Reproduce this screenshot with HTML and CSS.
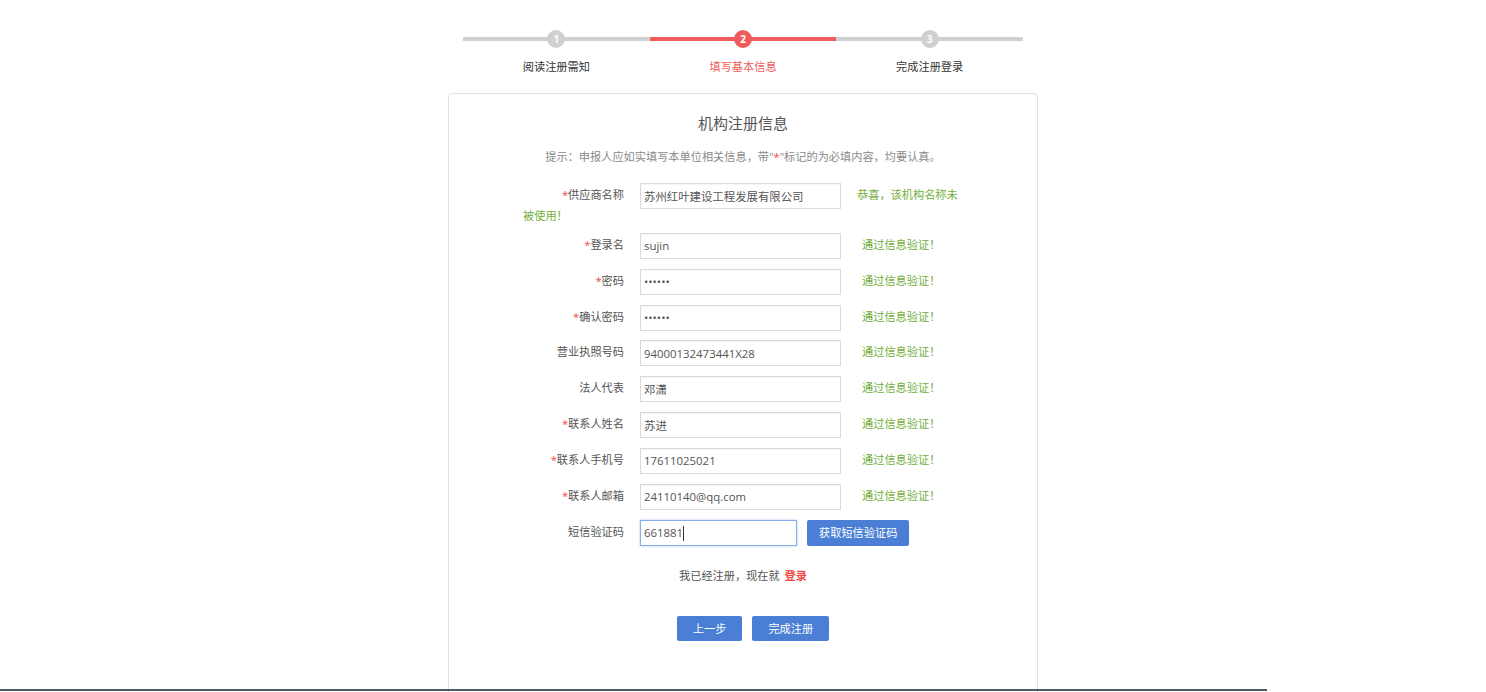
FILE: index.html
```html
<!DOCTYPE html>
<html lang="zh-CN">
<head>
<meta charset="utf-8">
<title>机构注册信息</title>
<link rel="stylesheet" href="styles.css">
</head>
<body>
<div class="steps">
  <div class="step">
    <div class="track"><span class="dot">1</span></div>
    <div class="step-label">阅读注册需知</div>
  </div>
  <div class="step active">
    <div class="track"><span class="dot">2</span></div>
    <div class="step-label">填写基本信息</div>
  </div>
  <div class="step">
    <div class="track"><span class="dot">3</span></div>
    <div class="step-label">完成注册登录</div>
  </div>
</div>

<div class="card">
  <h1 class="title">机构注册信息</h1>
  <p class="hint">提示：申报人应如实填写本单位相关信息，带"<span class="req">*</span>"标记的为必填内容，均要认真。</p>

  <form class="form">
    <div class="row"><label class="lbl"><span class="req">*</span>供应商名称</label><input class="ipt" type="text" value="苏州红叶建设工程发展有限公司"><span class="msg first">恭喜，该机构名称未被使用！</span></div>
    <div class="row"><label class="lbl"><span class="req">*</span>登录名</label><input class="ipt" type="text" value="sujin"><span class="msg">通过信息验证！</span></div>
    <div class="row"><label class="lbl"><span class="req">*</span>密码</label><input class="ipt" type="password" value="123456"><span class="msg">通过信息验证！</span></div>
    <div class="row"><label class="lbl"><span class="req">*</span>确认密码</label><input class="ipt" type="password" value="123456"><span class="msg">通过信息验证！</span></div>
    <div class="row"><label class="lbl">营业执照号码</label><input class="ipt" type="text" value="94000132473441X28"><span class="msg">通过信息验证！</span></div>
    <div class="row"><label class="lbl">法人代表</label><input class="ipt" type="text" value="邓潇"><span class="msg">通过信息验证！</span></div>
    <div class="row"><label class="lbl"><span class="req">*</span>联系人姓名</label><input class="ipt" type="text" value="苏进"><span class="msg">通过信息验证！</span></div>
    <div class="row"><label class="lbl"><span class="req">*</span>联系人手机号</label><input class="ipt" type="text" value="17611025021"><span class="msg">通过信息验证！</span></div>
    <div class="row"><label class="lbl"><span class="req">*</span>联系人邮箱</label><input class="ipt" type="text" value="24110140@qq.com"><span class="msg">通过信息验证！</span></div>
    <div class="row last"><label class="lbl">短信验证码</label><span class="sms-wrap"><input class="ipt sms" type="text" value="661881"><span class="caret"></span></span><button class="btn sms-btn" type="button">获取短信验证码</button></div>

    <p class="login">我已经注册，现在就 <a class="login-link" href="#">登录</a></p>

    <div class="actions">
      <button class="btn" type="button">上一步</button>
      <button class="btn" type="button">完成注册</button>
    </div>
  </form>
</div>

<div class="taskbar"></div>
</body>
</html>
```

FILE: styles.css
```css
html, body {
  margin: 0;
  padding: 0;
  overflow: hidden;
  background: #fff;
}
body {
  font-family: "Open Sans", "Noto Sans CJK SC", sans-serif;
  font-size: 11.2px;
  color: #555;
  padding-top: 30px;
}

/* steps */
.steps {
  display: flex;
  width: 560px;
  margin: 0 auto;
}
.step {
  flex: 1;
  text-align: center;
}
.track {
  height: 18px;
  display: flex;
  align-items: center;
  justify-content: center;
  background: linear-gradient(#d0d0d0, #d0d0d0) center / 100% 4px no-repeat;
}
.dot {
  width: 18px;
  height: 18px;
  border-radius: 50%;
  background: #d0d0d0;
  color: #fff;
  font-size: 10px;
  font-weight: bold;
  line-height: 18px;
  text-align: center;
}
.step.active .track {
  background: linear-gradient(#ef5b5b, #ef5b5b) center / 100% 4px no-repeat;
}
.step.active .dot {
  background: #ef5b5b;
}
.step-label {
  margin-top: 12px;
  line-height: 14px;
  color: #333;
}
.step.active .step-label {
  color: #ef5b5b;
}

/* card */
.card {
  box-sizing: border-box;
  width: 590px;
  min-height: 640px;
  margin: 19px auto 0;
  border: 1px solid #e2e2e2;
  border-radius: 4px;
  padding-top: 19px;
}
.title {
  margin: 0;
  font-size: 15px;
  font-weight: normal;
  line-height: 20px;
  color: #555;
  text-align: center;
}
.hint {
  margin: 17px 0 0;
  line-height: 14px;
  color: #8a8a8a;
  text-align: center;
}
.req {
  color: #f04848;
}

/* form */
.form {
  width: 440px;
  margin: 19px auto 0;
  line-height: 14px;
}
.row {
  margin-bottom: 9.85px;
}
.lbl {
  display: inline-block;
  width: 101px;
  text-align: right;
  color: #555;
}
.ipt {
  box-sizing: border-box;
  width: 201px;
  height: 26px;
  margin: 0 0 0 16px;
  padding: 0 3px;
  border: 1px solid #dadada;
  border-radius: 0;
  box-shadow: inset 0 1px 1px rgba(0, 0, 0, 0.04);
  font-family: "Open Sans", "Noto Sans CJK SC", sans-serif;
  font-size: 11.4px;
  color: #555;
  vertical-align: middle;
  outline: none;
}
.msg {
  margin-left: 21px;
  color: #72ae3c;
}
.msg.first {
  margin-left: 16px;
}
.sms-wrap {
  position: relative;
  display: inline-block;
  vertical-align: middle;
}
.ipt.sms {
  width: 157px;
  border-color: #86adef;
  box-shadow: 0 0 2px rgba(74, 127, 213, 0.45);
  vertical-align: top;
}
.caret {
  position: absolute;
  left: 59px;
  top: 6px;
  width: 1px;
  height: 15px;
  background: #333;
}
.btn {
  height: 25px;
  padding: 0 16px;
  border: none;
  border-radius: 2px;
  background: #4a7fd5;
  color: #fff;
  font-family: "Open Sans", "Noto Sans CJK SC", sans-serif;
  font-size: 11.2px;
  line-height: 25px;
  cursor: pointer;
}
.sms-btn {
  height: 26px;
  padding: 0 12px;
  margin-left: 10px;
  vertical-align: middle;
}
.login {
  margin: 23px 0 0;
  text-align: center;
  line-height: 14px;
  color: #555;
}
.login-link {
  color: #f04848;
  text-decoration: none;
  font-weight: bold;
  margin-left: 2px;
}
.actions {
  display: flex;
  justify-content: center;
  gap: 10px;
  margin-top: 33px;
  padding-left: 20px;
}

.taskbar {
  position: fixed;
  left: 0;
  top: 689px;
  width: 1267px;
  height: 2px;
  background: #4b5a66;
}
```
